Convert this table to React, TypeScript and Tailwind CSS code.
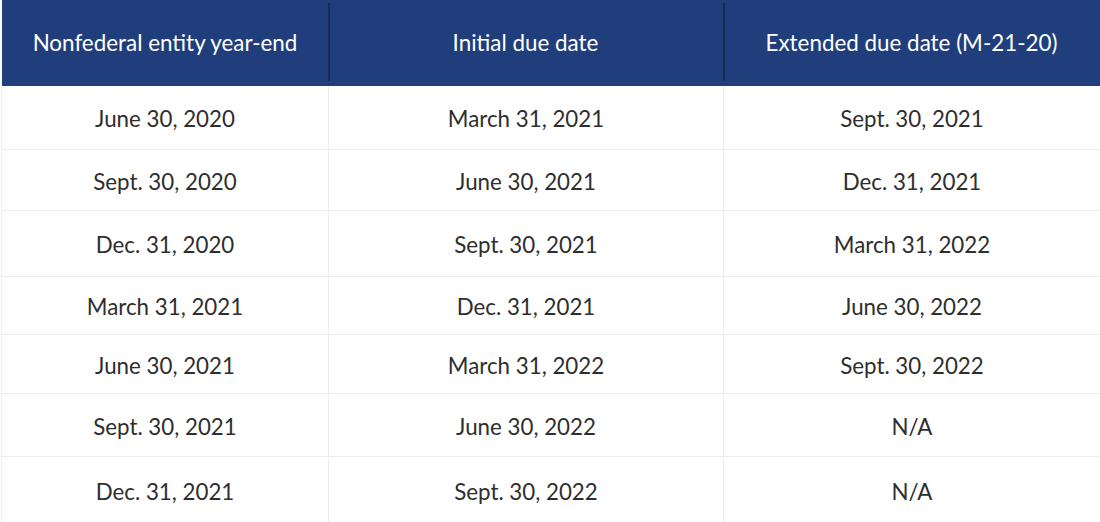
import React from 'react';

const headers = ['Nonfederal entity year-end', 'Initial due date', 'Extended due date (M-21-20)'];

const rows: { cells: string[]; h: string }[] = [
  { cells: ['June 30, 2020', 'March 31, 2021', 'Sept. 30, 2021'], h: 'h-[64px]' },
  { cells: ['Sept. 30, 2020', 'June 30, 2021', 'Dec. 31, 2021'], h: 'h-[61px]' },
  { cells: ['Dec. 31, 2020', 'Sept. 30, 2021', 'March 31, 2022'], h: 'h-[66px]' },
  { cells: ['March 31, 2021', 'Dec. 31, 2021', 'June 30, 2022'], h: 'h-[58px]' },
  { cells: ['June 30, 2021', 'March 31, 2022', 'Sept. 30, 2022'], h: 'h-[59px]' },
  { cells: ['Sept. 30, 2021', 'June 30, 2022', 'N/A'], h: 'h-[63px]' },
  { cells: ['Dec. 31, 2021', 'Sept. 30, 2022', 'N/A'], h: 'h-[66px]' },
];

const cols = 'grid grid-cols-[326px_395px_1fr]';

export default function App() {
  return (
    <div className="w-[1100px] h-[522px] overflow-hidden bg-white pl-[2px] font-['Lato',sans-serif]">
      {/* header */}
      <div className={`${cols} h-[86px] bg-[#1f3e7b] text-white text-[22.4px]`}>
        {headers.map((t, i) => (
          <div key={t} className="relative flex items-center justify-center pb-[1px]">
            {i > 0 && <div className="absolute left-0 top-[3px] bottom-[5px] w-[1.5px] bg-[#142a57]" />}
            {t}
          </div>
        ))}
      </div>

      {/* body */}
      <div className="border-l border-[#eeeeee] -ml-[1px]">
        {rows.map((r, ri) => (
          <div key={ri} className={`${cols} ${r.h} ${ri < rows.length - 1 ? 'border-b border-[#ececec]' : ''} text-[#2e2e2e] text-[22.3px]`}>
            {r.cells.map((c, ci) => (
              <div key={ci} className={`flex items-center justify-center pt-[3px] ${ci > 0 ? 'border-l border-[#ececec]' : ''}`}>
                {c}
              </div>
            ))}
          </div>
        ))}
      </div>
    </div>
  );
}
